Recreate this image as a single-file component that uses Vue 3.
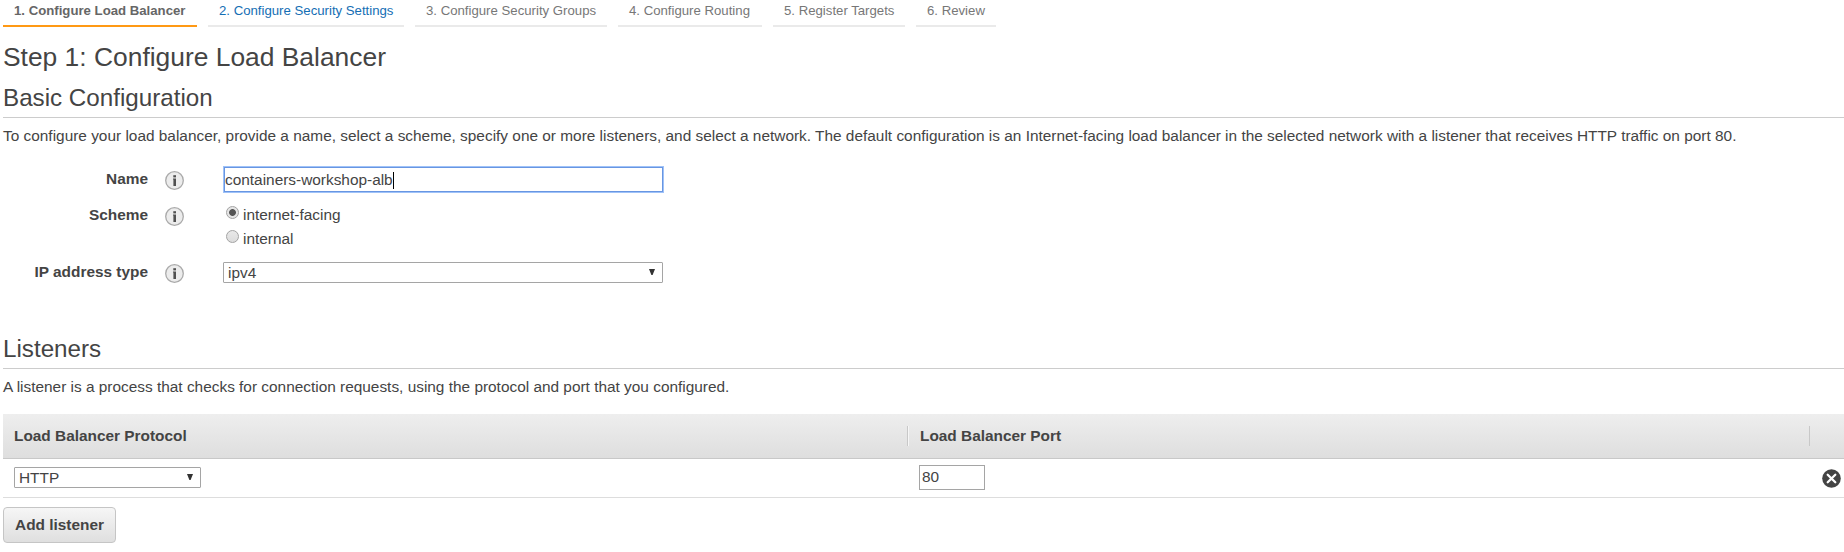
<script setup>
import { ref } from 'vue'

const steps = [
  '1. Configure Load Balancer',
  '2. Configure Security Settings',
  '3. Configure Security Groups',
  '4. Configure Routing',
  '5. Register Targets',
  '6. Review',
]
const name = ref('containers-workshop-alb')
const scheme = ref('internet-facing')
const port = ref('80')
</script>

<template>
  <main class="page">
    <nav class="steps">
      <a v-for="(s, i) in steps" :key="s" class="step" :class="'s' + (i + 1)">{{ s }}</a>
    </nav>

    <h1>Step 1: Configure Load Balancer</h1>
    <h2>Basic Configuration</h2>
    <p class="desc intro">To configure your load balancer, provide a name, select a scheme, specify one or more listeners, and select a network. The default configuration is an Internet-facing load balancer in the selected network with a listener that receives HTTP traffic on port 80.</p>

    <section class="form">
      <div class="row name-row">
        <span class="label">Name</span>
        <svg class="info" viewBox="0 0 19 19"><circle cx="9.5" cy="9.5" r="8.8" /><path d="M8 7.6h3v7.4H8.4V8.6H8z" /><rect x="8.3" y="4.2" width="2.7" height="2.2" /></svg>
        <div class="field focused"><span>{{ name }}</span><i class="caret"></i></div>
      </div>
      <div class="row scheme-row">
        <span class="label">Scheme</span>
        <svg class="info" viewBox="0 0 19 19"><circle cx="9.5" cy="9.5" r="8.8" /><path d="M8 7.6h3v7.4H8.4V8.6H8z" /><rect x="8.3" y="4.2" width="2.7" height="2.2" /></svg>
        <div class="options">
          <div v-for="o in ['internet-facing', 'internal']" :key="o" class="option" @click="scheme = o">
            <span class="radio" :class="{ on: scheme === o }"></span><span class="option-text">{{ o }}</span>
          </div>
        </div>
      </div>
      <div class="row ip-row">
        <span class="label">IP address type</span>
        <svg class="info" viewBox="0 0 19 19"><circle cx="9.5" cy="9.5" r="8.8" /><path d="M8 7.6h3v7.4H8.4V8.6H8z" /><rect x="8.3" y="4.2" width="2.7" height="2.2" /></svg>
        <div class="select wide"><span>ipv4</span><svg viewBox="0 0 6 6"><path d="M0 0h6L3.6 6H2.4z" /></svg></div>
      </div>
    </section>

    <h2 class="listeners">Listeners</h2>
    <p class="desc about">A listener is a process that checks for connection requests, using the protocol and port that you configured.</p>

    <section class="table">
      <div class="thead">
        <div class="th">Load Balancer Protocol</div>
        <div class="th port">Load Balancer Port</div>
        <div class="th last"></div>
      </div>
      <div class="tr">
        <div class="td"><div class="select proto"><span>HTTP</span><svg viewBox="0 0 6 6"><path d="M0 0h6L3.6 6H2.4z" /></svg></div></div>
        <div class="td port"><div class="field num">{{ port }}</div></div>
        <div class="td last"><svg class="remove" viewBox="0 0 20 20"><circle cx="10" cy="10" r="9.8" /><path d="M6 6l8 8M14 6l-8 8" /></svg></div>
      </div>
    </section>

    <button class="add">Add listener</button>
  </main>
</template>

<style>
body { background: #fff; overflow: hidden; }
</style>

<style scoped>
* { box-sizing: border-box; }
.page {
  width: 1844px;
  height: 552px;
  overflow: hidden;
  padding-left: 3px;
  color: #444;
  font: 15.4px/20px "Liberation Sans", Arial, sans-serif;
}
.steps { display: flex; gap: 11px; height: 27px; }
.step {
  height: 27px;
  padding-left: 11px;
  border-bottom: 2px solid #eaeaea;
  font-size: 13.2px;
  line-height: 22px;
  color: #777;
  white-space: nowrap;
}
.s1 { width: 194px; border-color: #ff9914; color: #666; font-weight: bold; }
.s2 { width: 196px; color: #146eb4; }
.s3 { width: 192px; }
.s4 { width: 144px; }
.s5 { width: 132px; }
.s6 { width: 80px; }
h1 { margin: 15px 0 0; font-size: 26.4px; line-height: 30px; font-weight: normal; }
h2 {
  margin: 8px 0 0;
  height: 38px;
  border-bottom: 1px solid #ccc;
  font-size: 24.2px;
  line-height: 36px;
  font-weight: normal;
}
.desc { margin: 8px 0 0; white-space: nowrap; }
.intro { letter-spacing: 0.004px; }
.form { display: flex; flex-direction: column; margin-top: 20px; height: 165px; }
.row { display: flex; align-items: flex-start; }
.label { width: 145px; text-align: right; font-weight: bold; padding-top: 3px; }
.info { width: 19px; height: 19px; margin: 5px 49px 0 17px; }
.info circle { fill: #ececec; stroke: #aaa; stroke-width: 1.3; }
.info path, .info rect { fill: #505050; }
.name-row { height: 36px; }
.scheme-row { height: 57px; }
.field { display: flex; align-items: center; border: 1px solid #a5a5a5; background: #fff; }
.focused {
  width: 441px;
  height: 27px;
  margin-left: -10px;
  padding: 1px 0 0 1px;
  border: 1px solid #9fc2f8;
  box-shadow: inset 0 0 0 1px #6896e2;
}
.caret { width: 1px; height: 17px; background: #000; }
.options { margin-left: -8px; padding-top: 4px; }
.option { display: flex; height: 24px; }
.option-text { margin-top: -1px; }
.radio {
  width: 13px;
  height: 13px;
  margin: 0 4px 0 1px;
  border: 1px solid #a3a3a3;
  border-radius: 50%;
  background: linear-gradient(#e8e8e8, #dcdcdc);
}
.radio.on { background: radial-gradient(circle, #555 0 3px, #e6e6e6 3.8px); }
.select { display: flex; align-items: center; justify-content: space-between; height: 21px; padding: 0 7px 0 4px; border: 1px solid #a5a5a5; border-radius: 1px; }
.select svg { width: 6px; height: 6px; margin-bottom: 2px; fill: #333; }
.wide { width: 440px; margin: 3px 0 0 -10px; }
.listeners { margin-top: 0; }
.table { margin-top: 17px; }
.thead { display: flex; align-items: center; height: 45px; border-bottom: 1px solid #c8c8c8; background: linear-gradient(#eee, #dedede); }
.th { width: 904px; height: 20px; padding-left: 11px; font-weight: bold; }
.th.port, .th.last { border-left: 1px solid #c8c8c8; }
.th.port { width: 902px; padding-left: 12px; box-shadow: inset 1px 0 #f6f6f6; }
.th.last { width: 35px; }
.tr { display: flex; height: 39px; border-bottom: 1px solid #ddd; }
.td { width: 904px; padding: 8px 0 0 11px; }
.td.port { width: 902px; padding-left: 12px; }
.td.last { width: 35px; padding: 10px 0 0 13px; }
.proto { width: 187px; }
.num { width: 66px; height: 25px; margin-top: -2px; padding: 0 0 1px 2px; }
.remove { display: block; width: 19px; height: 19px; }
.remove circle { fill: #444; }
.remove path { stroke: #fff; stroke-width: 2.4; stroke-linecap: round; }
.add {
  display: block;
  width: 113px;
  height: 36px;
  margin-top: 9px;
  padding: 0;
  border: 1px solid #c5c5c5;
  border-radius: 4px;
  background: linear-gradient(#f6f6f6, #dfdfdf);
  color: #444;
  font: bold 15.4px/34px "Liberation Sans", Arial, sans-serif;
}
</style>
